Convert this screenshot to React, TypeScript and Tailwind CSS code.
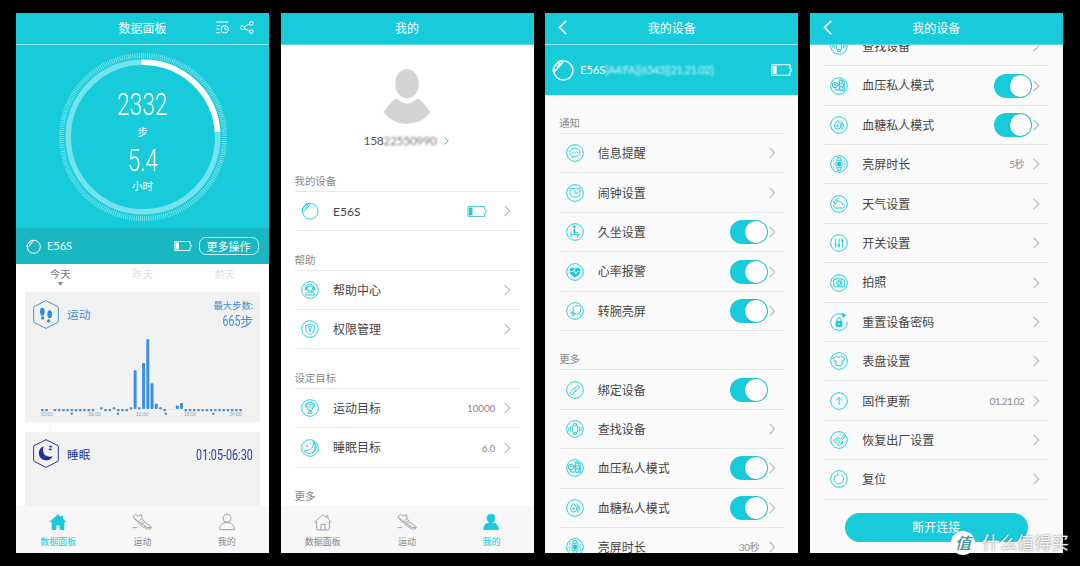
import React from 'react';
import clsx from 'clsx';

const TEAL = '#17cbda';

type IconName =
  | 'device'
  | 'help'
  | 'permission'
  | 'goal'
  | 'sleep'
  | 'message'
  | 'alarm'
  | 'sedentary'
  | 'heart'
  | 'wrist'
  | 'bind'
  | 'find'
  | 'pressure'
  | 'sugar'
  | 'screen'
  | 'weather'
  | 'switches'
  | 'camera'
  | 'password'
  | 'dial'
  | 'firmware'
  | 'factory'
  | 'reset';

interface RowItem {
  icon: IconName;
  label: string;
  value?: string;
  toggle?: boolean;
  battery?: boolean;
  noArrow?: boolean;
}

const DEVICE_ROWS: RowItem[] = [{ icon: 'device', label: 'E56S', battery: true }];

const HELP_ROWS: RowItem[] = [
  { icon: 'help', label: '帮助中心' },
  { icon: 'permission', label: '权限管理' },
];

const GOAL_ROWS: RowItem[] = [
  { icon: 'goal', label: '运动目标', value: '10000' },
  { icon: 'sleep', label: '睡眠目标', value: '6.0' },
];

const NOTICE_ROWS: RowItem[] = [
  { icon: 'message', label: '信息提醒' },
  { icon: 'alarm', label: '闹钟设置' },
  { icon: 'sedentary', label: '久坐设置', toggle: true },
  { icon: 'heart', label: '心率报警', toggle: true },
  { icon: 'wrist', label: '转腕亮屏', toggle: true },
];

const MORE_ROWS: RowItem[] = [
  { icon: 'bind', label: '绑定设备', toggle: true, noArrow: true },
  { icon: 'find', label: '查找设备' },
  { icon: 'pressure', label: '血压私人模式', toggle: true },
  { icon: 'sugar', label: '血糖私人模式', toggle: true },
  { icon: 'screen', label: '亮屏时长', value: '30秒' },
];

const SCROLLED_ROWS: RowItem[] = [
  { icon: 'find', label: '查找设备' },
  { icon: 'pressure', label: '血压私人模式', toggle: true },
  { icon: 'sugar', label: '血糖私人模式', toggle: true },
  { icon: 'screen', label: '亮屏时长', value: '5秒' },
  { icon: 'weather', label: '天气设置' },
  { icon: 'switches', label: '开关设置' },
  { icon: 'camera', label: '拍照' },
  { icon: 'password', label: '重置设备密码' },
  { icon: 'dial', label: '表盘设置' },
  { icon: 'firmware', label: '固件更新', value: '01.21.02' },
  { icon: 'factory', label: '恢复出厂设置' },
  { icon: 'reset', label: '复位' },
];

const ring = <circle cx="27" cy="27" r="25" />;

const ICONS: Record<IconName, React.ReactNode> = {
  device: (
    <>
      <circle cx="28" cy="28" r="23.5" />
      <path d="M3 28C3 20 12 6 21 4c5 0 6 4 3 8L8 29c-2 2-5 2-5-1zM12 20l8-9M16 8l5 4" />
    </>
  ),
  help: (
    <>
      {ring}
      <circle cx="27" cy="22" r="8" />
      <path d="M15 25v-4a12 12 0 0 1 24 0v4M13 20v7h4v-7zM37 20v7h4v-7zM37 28c-1 4-4 5-8 5M13 42c1-7 6-9 10-9h8c4 0 9 2 10 9z" />
    </>
  ),
  permission: (
    <>
      {ring}
      <path d="M27 12c4 3 8 4 13 4v11c0 8-6 13-13 16-7-3-13-8-13-16V16c5 0 9-1 13-4z" />
      <circle cx="27" cy="23" r="4" />
      <path d="M27 27v9M27 32h3" strokeWidth="3" />
    </>
  ),
  goal: (
    <>
      {ring}
      <path d="M18 11h18v14a9 9 0 0 1-18 0zM18 14h-4v9l4 3M36 14h4v9l-4 3M22 18h10M22 24h10M27 34v7M20 43l4-8h6l4 8z" />
    </>
  ),
  sleep: (
    <>
      {ring}
      <path d="M36 7c5 15-6 29-27 29 5 7 15 10 23 6C44 36 46 18 36 7z" />
      <path d="M40 9c9 10 7 26-6 34M16 19h5M27 14h3M17 25l4-3" />
    </>
  ),
  message: (
    <>
      {ring}
      <path d="M27 13c9 0 15 5 15 12s-6 12-15 12l-9 4 1-6c-4-2-7-6-7-10 0-7 6-12 15-12z" />
      <path d="M19 25h3M26 25h3M33 25h3" strokeWidth="3.5" />
    </>
  ),
  alarm: (
    <>
      {ring}
      <path d="M16 14h22c3 0 4 1 4 5v5c0 10-6 16-15 16S12 34 12 24v-5c0-4 1-5 4-5zM27 19v8h9M12 15l4-4M42 15l-4-4" />
    </>
  ),
  sedentary: (
    <>
      {ring}
      <circle cx="25" cy="11" r="3" fill={TEAL} />
      <path d="M15 25v19M15 34h20v10M25 17v17M27 22v7h9" strokeWidth="2.6" />
      <path d="M25 17v13M38 34v5" strokeWidth="4.5" />
    </>
  ),
  heart: (
    <>
      {ring}
      <path
        d="M27 44C18 37 10 31 10 23c0-9 12-12 17-4 5-8 17-5 17 4 0 8-8 14-17 21z"
        fill={TEAL}
        stroke="none"
      />
      <path d="M8 26h12l4-7 5 14 4-7h13" stroke="#fafafa" strokeWidth="2.5" />
    </>
  ),
  wrist: (
    <>
      {ring}
      <path d="M23 16c7-8 19-5 21 3s-2 15-9 17c-5 1-9-1-11-3M23 16c-3 4-2 8 0 11M41 36l4 4" />
      <path d="M13 34l8-6 7 8-8 6zM17 36l7-4M19 31l6 8" strokeWidth="2.5" />
    </>
  ),
  bind: (
    <>
      {ring}
      <path
        d="M25 26l6-10c4-6 11-2 8 4l-6 9c-2 3-5 3-7 1M29 27l-7 11c-4 6-11 2-8-4l6-9c2-3 5-3 7-1"
        strokeWidth="2.5"
      />
    </>
  ),
  find: (
    <>
      {ring}
      <rect x="19" y="17" width="16" height="20" rx="4" />
      <path d="M22 17l1-6h8l1 6M22 37l1 6h8l1-6M14 20q-3 7 0 14M40 20q3 7 0 14M9 22q-2 5 0 10M45 22q2 5 0 10" />
    </>
  ),
  pressure: (
    <>
      {ring}
      <circle cx="15" cy="24" r="8" />
      <path d="M15 32v7h13V12h14v18M25 9h12v11H25M30 27h14v14H30zM34 31h6v6h-6M12 24l3-4 3 6" />
      <path d="M24 24h5M38 22h6" strokeWidth="3" />
    </>
  ),
  sugar: (
    <>
      {ring}
      <path d="M23 13c5 7 9 11 9 17a9 9 0 0 1-18 0c0-6 4-10 9-17zM31 14c5 5 11 10 10 17-1 5-4 8-8 8M33 20c4 4 4 11 1 15" />
      <path d="M23 25v9M18.5 29.5h9" strokeWidth="2.5" />
    </>
  ),
  screen: (
    <>
      {ring}
      <rect x="18" y="16" width="18" height="22" rx="4" />
      <path d="M21 16l1-8h10l1 8M21 38l1 8h10l1-8M11 16v5M43 16v5M9 27h5M40 27h5M11 34v5M43 34v5" />
      <path d="M23 21h8v12h-8z" fill={TEAL} />
    </>
  ),
  weather: (
    <>
      {ring}
      <path d="M17 39c-10-1-8-13 0-12 2-11 17-11 19 0 9-1 11 11 2 12z" />
      <path d="M14 27c-5-8 3-15 10-10M14 12l3 3M23 9v4M8 18l4 1" />
    </>
  ),
  switches: (
    <>
      {ring}
      <path d="M17 14v26M27 14v26M37 14v26" />
      <path d="M17 27v7M27 31v7M34 20h6" strokeWidth="5" />
    </>
  ),
  camera: (
    <>
      {ring}
      <path d="M11 17h8l2-4h12l2 4h8v21H11zM14 13h4" />
      <circle cx="28" cy="27" r="8" />
      <circle cx="28" cy="27" r="4" />
    </>
  ),
  password: (
    <>
      <path d="M52 27A25 25 0 1 1 38 5" />
      <path d="M36 1l11 5-7 7z" fill={TEAL} />
      <rect x="18" y="25" width="18" height="15" rx="2" fill={TEAL} />
      <path d="M21.5 25v-5a5.5 5.5 0 0 1 11 0v5" strokeWidth="3" />
      <path d="M27 30v5" stroke="#fafafa" strokeWidth="3" />
    </>
  ),
  dial: (
    <>
      {ring}
      <path d="M20 13c3 5 11 5 14 0l10 6-4 9-4-2v15H18V26l-4 2-4-9z" />
    </>
  ),
  firmware: (
    <>
      {ring}
      <path d="M27 39V16M18 25l9-9 9 9" />
    </>
  ),
  factory: (
    <>
      {ring}
      <path d="M31 25l9-11c3-3 6 1 4 4l-9 11 4 4-4 4-14-14 4-4zM22 20l-12 8 18 16 7-8M17 30l5-4M24 38l5-4" />
    </>
  ),
  reset: (
    <>
      {ring}
      <path d="M22 14a14 14 0 1 0 12 1M22 14l2-5M22 14l6 3" />
    </>
  ),
};

const RowIcon: React.FC<{ name: IconName }> = ({ name }) => (
  <svg
    className="w-[18px] h-[18px] shrink-0"
    viewBox="0 0 54 54"
    fill="none"
    stroke={TEAL}
    strokeWidth={2.8}
  >
    {ICONS[name]}
  </svg>
);

const BandLogo: React.FC<{ className: string }> = ({ className }) => (
  <svg className={className} viewBox="0 0 54 54" fill="none" stroke="white" strokeWidth={3.4}>
    {ICONS.device}
  </svg>
);

const Battery: React.FC<{ className: string; color: string }> = ({ className, color }) => (
  <svg className={className} viewBox="0 0 60 34" fill="none" stroke={color} strokeWidth={3}>
    <path d="M2 2h52v10l4 2v6l-4 2v10H2z" />
    <path d="M5 5h11v24H5z" fill={color} stroke="none" />
  </svg>
);

const Chevron: React.FC<{ className?: string }> = ({ className }) => (
  <svg
    className={clsx('w-[6.5px] h-3 shrink-0', className)}
    viewBox="0 0 6.5 12"
    fill="none"
    stroke="#b8b8b8"
    strokeWidth={1.1}
  >
    <path d="M.6.8 5.8 6 .6 11.2" />
  </svg>
);

const Toggle: React.FC = () => (
  <span className="mr-px flex w-[38px] h-6 shrink-0 items-center justify-end rounded-full bg-[#17cbda] pr-[0.8px]">
    <span className="w-[21.5px] h-[22px] rounded-full bg-white shadow-[0_0_1px_#0a7d88]" />
  </span>
);

const Header: React.FC<{ title: string; back?: boolean; line?: boolean; children?: React.ReactNode }> = ({
  title,
  back,
  line,
  children,
}) => (
  <div
    className={clsx(
      'relative z-10 flex h-8 shrink-0 items-center justify-center border-b bg-[#17cbda] text-[12px] text-white',
      line ? 'border-[#94eaf0]' : 'border-[#5edbe5]'
    )}
  >
    {title}
    {back && (
      <svg
        className="absolute left-[13px] top-[7px] w-[9px] h-[15px]"
        viewBox="0 0 9 15"
        fill="none"
        stroke="white"
        strokeWidth={1.6}
      >
        <path d="M8.2.8 1.4 7.3l6.8 6.9" />
      </svg>
    )}
    {children}
  </div>
);

const SectionLabel: React.FC<{ text: string; last?: boolean }> = ({ text, last }) => (
  <div
    className={clsx(
      'mx-[14px] flex h-[39.4px] shrink-0 items-end border-b pb-[2px] text-[10.4px] leading-[15px] text-[#888]',
      last ? 'border-transparent' : 'border-[#e6e6e6]'
    )}
  >
    {text}
  </div>
);

const Row: React.FC<{ item: RowItem }> = ({ item }) => (
  <div className="mx-[14px] flex h-[39.4px] shrink-0 items-center border-b border-[#e6e6e6] pl-[6.5px] pr-[9px] pt-[0.3px] text-[#444]">
    <RowIcon name={item.icon} />
    <span className="ml-[14px] flex-1 pt-[1.7px] text-[12px]">{item.label}</span>
    {item.value && (
      <span
        className={clsx(
          'mr-[9px] pt-px text-[10px] text-[#8c8c8c]',
          item.icon === 'firmware' ? '-tracking-[0.6px]' : '-tracking-[0.2px]'
        )}
      >
        {item.value}
      </span>
    )}
    {item.battery && <Battery className="mr-[17px] w-5 h-[11px]" color="#35c3cd" />}
    {item.toggle && <Toggle />}
    <Chevron className={clsx(item.noArrow && 'invisible')} />
  </div>
);

const Rows: React.FC<{ items: RowItem[] }> = ({ items }) => (
  <>
    {items.map((item) => (
      <Row key={item.label} item={item} />
    ))}
  </>
);

const TabBar: React.FC<{ active: 'home' | 'mine' }> = ({ active }) => (
  <div className="mt-auto grid h-[47px] shrink-0 grid-cols-3 bg-[#f7f7f7] text-[9px] leading-3 text-[#8a8a8a]">
    <div className={clsx('flex flex-col items-center pt-[7px]', active === 'home' && 'text-[#17cbda]')}>
      {active === 'home' ? (
        <svg className="w-[18px] h-[18px]" viewBox="0 0 54 54" fill={TEAL}>
          <path d="M27 4 1 27h7v21q0 3 3 3h11V37h10v14h11q3 0 3-3V27h7L42 17V8h-6v4z" />
        </svg>
      ) : (
        <svg className="w-[18px] h-[18px]" viewBox="0 0 54 54" fill="none" stroke="#8f8f8f" strokeWidth={2.4}>
          <path d="M27 5 2 27h6v21q0 3 3 3h32q3 0 3-3V27h6L42 17V9h-5v4zM21 51V34h12v17" />
        </svg>
      )}
      <span className="mt-[5px]">数据面板</span>
    </div>
    <div className="flex flex-col items-center pt-[7px]">
      <svg className="w-5 h-[18px]" viewBox="0 0 60 54" fill="none" stroke="#8f8f8f" strokeWidth={2.4}>
        <path d="M4 9 11 4l7 5 11-4 1 11 9 13 15 9c5 3 5 8 1 10H44L28 38 5 15zM5 14l24 19 15 10 13 1M29 18l-8 5M33 24l-8 5M37 29l-8 5M2 44h14M42 37l-4 4" />
      </svg>
      <span className="mt-[5px]">运动</span>
    </div>
    <div className={clsx('flex flex-col items-center pt-[7px]', active === 'mine' && 'text-[#17cbda]')}>
      <svg
        className="w-[18px] h-[18px]"
        viewBox="0 0 54 54"
        fill={active === 'mine' ? TEAL : 'none'}
        stroke={active === 'mine' ? TEAL : '#8f8f8f'}
        strokeWidth={2.4}
      >
        <circle cx="27" cy="16" r="12" />
        <path d="M5 50c0-13 7-21 22-21s22 8 22 21z" />
      </svg>
      <span className="mt-[5px]">我的</span>
    </div>
  </div>
);

/* Step ring: dense tick halo, pale track and white progress arc */
const StepRing: React.FC = () => (
  <div className="grid h-[183px] shrink-0 place-items-center bg-[#17cbda]">
    <svg className="col-start-1 row-start-1 w-[172px] h-[172px]" viewBox="-86 -86 172 172" fill="none">
      <circle r="81.5" stroke="#83e5ec" strokeWidth="5" strokeDasharray=".9 1.23" />
      <circle r="74.8" stroke="#74e3eb" strokeWidth="5.6" />
      <path d="M-1.5-74.8A74.8 74.8 0 0 1 74.6-5" stroke="white" strokeWidth="5.6" />
    </svg>
    <div className="col-start-1 row-start-1 flex flex-col items-center pt-[9px] text-white">
      <span className="scale-x-[0.73] font-['Roboto'] text-[31px] font-light leading-[34px]">2332</span>
      <span className="mt-0.5 text-[10.5px] leading-[17px]">步</span>
      <span className="mt-[3px] scale-x-[0.73] font-['Roboto'] text-[31px] font-light leading-[34px]">5.4</span>
      <span className="text-[10.5px] leading-[17px]">小时</span>
    </div>
  </div>
);

// Half-hour slots: full bars by height, raised dots and faint ones by index
const BAR_HEIGHTS: Record<number, number> = { 22: 38.7, 24: 46, 25: 69.7, 26: 25.7, 27: 5.3, 32: 3.6, 33: 6 };
const RAISED = [14, 17, 21, 23, 28];
const FAINT = [2, 13, 30, 31];

const StepChart: React.FC = () => (
  <svg className="mt-auto w-[235px] h-[88px]" viewBox="0 0 235 88">
    {Array.from({ length: 48 }, (_, i) => {
      const x = 17.3 + i * 4.22;
      const h = BAR_HEIGHTS[i];
      if (h) {
        return <rect key={i} x={x - 1.5} y={75 - h} width="3" height={h} rx=".8" fill="#3a90dc" />;
      }
      return (
        <rect
          key={i}
          x={x - 1.3}
          y={RAISED.includes(i) ? 73.2 : 75}
          width="2.6"
          height={FAINT.includes(i) ? 0.8 : 2.2}
          rx=".6"
          fill={FAINT.includes(i) ? '#c5d8e8' : '#4b8fc6'}
        />
      );
    })}
    {[46.7, 93, 140.7, 188.3].map((x) => (
      <circle key={x} cx={x} cy="79.8" r="1.2" fill="#4b8fc6" />
    ))}
    {['00:00', '06:00', '12:00', '18:00', '24:00'].map((t, i) => (
      <text
        key={t}
        x={[22, 69.7, 117, 165, 210.5][i]}
        y="81.5"
        textAnchor="middle"
        fontSize="4.8"
        fill="#74a9d0"
      >
        {t}
      </text>
    ))}
  </svg>
);

const Hexagon: React.FC<{ color: string; children: React.ReactNode }> = ({ color, children }) => (
  <svg className="w-[26px] h-[29px] shrink-0" viewBox="0 0 78 87" fill="none" stroke={color} strokeWidth={3}>
    <path d="M39 2 75 20q1 1 1 3v41q0 2-1 3L39 85 3 67q-1-1-1-3V23q0-2 1-3z" />
    {children}
  </svg>
);

const DashboardScreen: React.FC = () => (
  <>
    <Header title="数据面板" line>
      <div className="absolute right-[15px] top-[8px] flex items-center gap-[11px]">
        <svg className="w-[13px] h-[13px]" viewBox="0 0 39 39" fill="none" stroke="white" strokeWidth={3}>
          <path d="M1 3h37M1 14h12M1 24h9M1 35h12" />
          <circle cx="26" cy="25" r="11" />
          <path d="M26 18v7h6" />
        </svg>
        <svg className="w-[14px] h-[13px]" viewBox="0 0 42 39" fill="none" stroke="white" strokeWidth={3}>
          <circle cx="8" cy="20" r="6" />
          <circle cx="34" cy="7" r="5.5" />
          <circle cx="34" cy="32" r="5.5" />
          <path d="m13 17 16-8M13 23l16 7" />
        </svg>
      </div>
    </Header>
    <StepRing />
    <div className="flex h-9 shrink-0 items-center bg-[#18b7c1] pl-2.5 pr-[10.5px] text-[11px] text-white">
      <BandLogo className="w-[15px] h-[15px]" />
      <span className="ml-1.5 flex-1">E56S</span>
      <Battery className="w-[18px] h-2.5" color="white" />
      <span className="ml-[7px] flex h-[18px] w-[60px] items-center justify-center rounded-[7px] border border-[#c8eff1] leading-none">
        更多操作
      </span>
    </div>
    <div className="grid h-7 shrink-0 grid-cols-3 px-[3px] pt-[3px] text-center text-[10.4px] leading-[15px] text-[#e0e0e0]">
      <div className="flex flex-col items-center text-[#777]">
        今天
        <svg className="w-[5px] h-1" viewBox="0 0 5 4" fill="#888">
          <path d="M0 0h5L2.5 4z" />
        </svg>
      </div>
      <span>昨天</span>
      <span>前天</span>
    </div>
    <div className="mx-[9px] flex h-[130px] shrink-0 flex-col bg-[#f1f1f1]">
      <div className="flex h-[42px] items-center pl-2 pr-[7px] pt-0.5 text-[#3f8fcf]">
        <Hexagon color="#4394d6">
          <g fill="#328ae0" stroke="none">
            <ellipse cx="28" cy="35" rx="7" ry="12" />
            <ellipse cx="50" cy="43" rx="7" ry="12" />
            <circle cx="29" cy="54" r="5" />
            <circle cx="47" cy="63" r="5" />
          </g>
        </Hexagon>
        <span className="ml-2 flex-1 pt-0.5 text-[11.7px]">运动</span>
        <div className="flex flex-col items-end">
          <span className="text-[9.3px] leading-[14px]">最大步数:</span>
          <span className="flex items-center text-[13px] leading-[17px]">
            <span className="-ml-2 origin-right scale-x-[0.7] font-['Roboto'] text-[15px]">665</span>
            步
          </span>
        </div>
      </div>
      <StepChart />
    </div>
    <div className="ml-[34px] h-[10px] w-px shrink-0 bg-[#efefef]" />
    <div className="mx-[9px] flex min-h-0 flex-1 items-start bg-[#f1f1f1] pl-2 pr-[7px] pt-[7px] text-[#263994]">
      <Hexagon color="#263994">
        <path
          d="M32 22C12 28 12 61 38 64c10 1 17-4 21-12C37 58 25 42 32 22z"
          fill="#1f3391"
          stroke="none"
        />
        <path d="M48 22h9l-9 10h9" />
      </Hexagon>
      <span className="ml-2 mt-[7px] flex-1 text-[11.7px]">睡眠</span>
      <span className="mt-[6px] origin-right scale-x-[0.72] whitespace-nowrap font-['Roboto'] text-[15px] leading-5">
        01:05-06:30
      </span>
    </div>
    <TabBar active="home" />
  </>
);

const MineScreen: React.FC = () => (
  <>
    <Header title="我的" />
    <div className="flex h-[107.5px] shrink-0 flex-col items-center pt-6">
      <svg className="w-12 h-14" viewBox="0 0 48 56" fill="#d4d4d4">
        <ellipse cx="24" cy="14.7" rx="11.7" ry="14.7" />
        <path d="M.5 43.5C5 37 8.5 32.5 11.5 30.5q2-1 4 .5 8.5 7 17 0 2-1.5 4-.5c3 2 6.5 6.5 11 13q-10 11.5-23.5 11.5T.5 43.5z" />
      </svg>
      <div className="mt-[7px] flex items-center pr-0.5 text-[12px] leading-[18px] text-[#555]">
        <span className="-tracking-[0.4px]">158</span>
        <span className="-tracking-[0.3px] text-[#777] blur-[1px]">22550990</span>
        <svg className="ml-[7px] w-[5px] h-2" viewBox="0 0 5 8" fill="none" stroke="#53b5a8" strokeWidth={1}>
          <path d="M.5.5 4.3 4 .5 7.5" />
        </svg>
      </div>
    </div>
    <div className="flex min-h-0 flex-1 flex-col overflow-hidden">
      <SectionLabel text="我的设备" />
      <Rows items={DEVICE_ROWS} />
      <SectionLabel text="帮助" />
      <Rows items={HELP_ROWS} />
      <SectionLabel text="设定目标" />
      <Rows items={GOAL_ROWS} />
      <SectionLabel text="更多" last />
    </div>
    <TabBar active="mine" />
  </>
);

const DeviceScreen: React.FC = () => (
  <>
    <Header title="我的设备" back line />
    <div className="flex h-[50px] shrink-0 items-center bg-[#17cbda] pl-[7px] pr-[6.5px] text-[11px] text-white">
      <BandLogo className="w-[22px] h-[22px]" />
      <span className="ml-1.5">E56S</span>
      <span className="flex-1 whitespace-nowrap text-[11px] -tracking-[0.45px] opacity-80 blur-[0.9px]">
        [A4:FA][6543][21.21.02]
      </span>
      <Battery className="w-[21px] h-3" color="white" />
    </div>
    <div className="-mt-[0.4px] flex min-h-0 flex-1 flex-col overflow-hidden">
      <SectionLabel text="通知" />
      <Rows items={NOTICE_ROWS} />
      <SectionLabel text="更多" />
      <Rows items={MORE_ROWS} />
    </div>
  </>
);

const DeviceScrolledScreen: React.FC = () => (
  <>
    <Header title="我的设备" back />
    <div className="flex min-h-0 flex-1 flex-col overflow-hidden">
      <div className="-mt-[18.2px] flex flex-col">
        <Rows items={SCROLLED_ROWS} />
      </div>
      <button className="mx-auto mt-[13.4px] h-[29px] w-[183px] shrink-0 rounded-full bg-[#17cbda] pt-px text-[12px] text-white">
        断开连接
      </button>
    </div>
  </>
);

const Phone: React.FC<{ className: string; children: React.ReactNode }> = ({ className, children }) => (
  <section className={clsx('flex h-[540px] w-[253px] shrink-0 flex-col overflow-hidden', className)}>
    {children}
  </section>
);

export default function App() {
  return (
    <main className="relative flex h-[566px] w-[1080px] gap-[11.6px] overflow-hidden bg-black pl-4 pt-[13px] font-['Lato','Noto_Sans_CJK_SC',sans-serif]">
      <Phone className="bg-white">
        <DashboardScreen />
      </Phone>
      <Phone className="bg-white">
        <MineScreen />
      </Phone>
      <Phone className="bg-[#fafafa]">
        <DeviceScreen />
      </Phone>
      <Phone className="bg-[#fafafa]">
        <DeviceScrolledScreen />
      </Phone>

      {/* Watermark */}
      <div className="absolute bottom-[11px] right-[11px] z-20 flex items-center gap-[7px]">
        <span className="flex h-6 w-6 items-center justify-center rounded-full bg-white text-[16px] font-medium italic leading-none text-[#3b9299]">
          值
        </span>
        <span className="text-[17.4px] leading-6 text-white/90 [text-shadow:0_0_2px_#666]">什么值得买</span>
      </div>
    </main>
  );
}
